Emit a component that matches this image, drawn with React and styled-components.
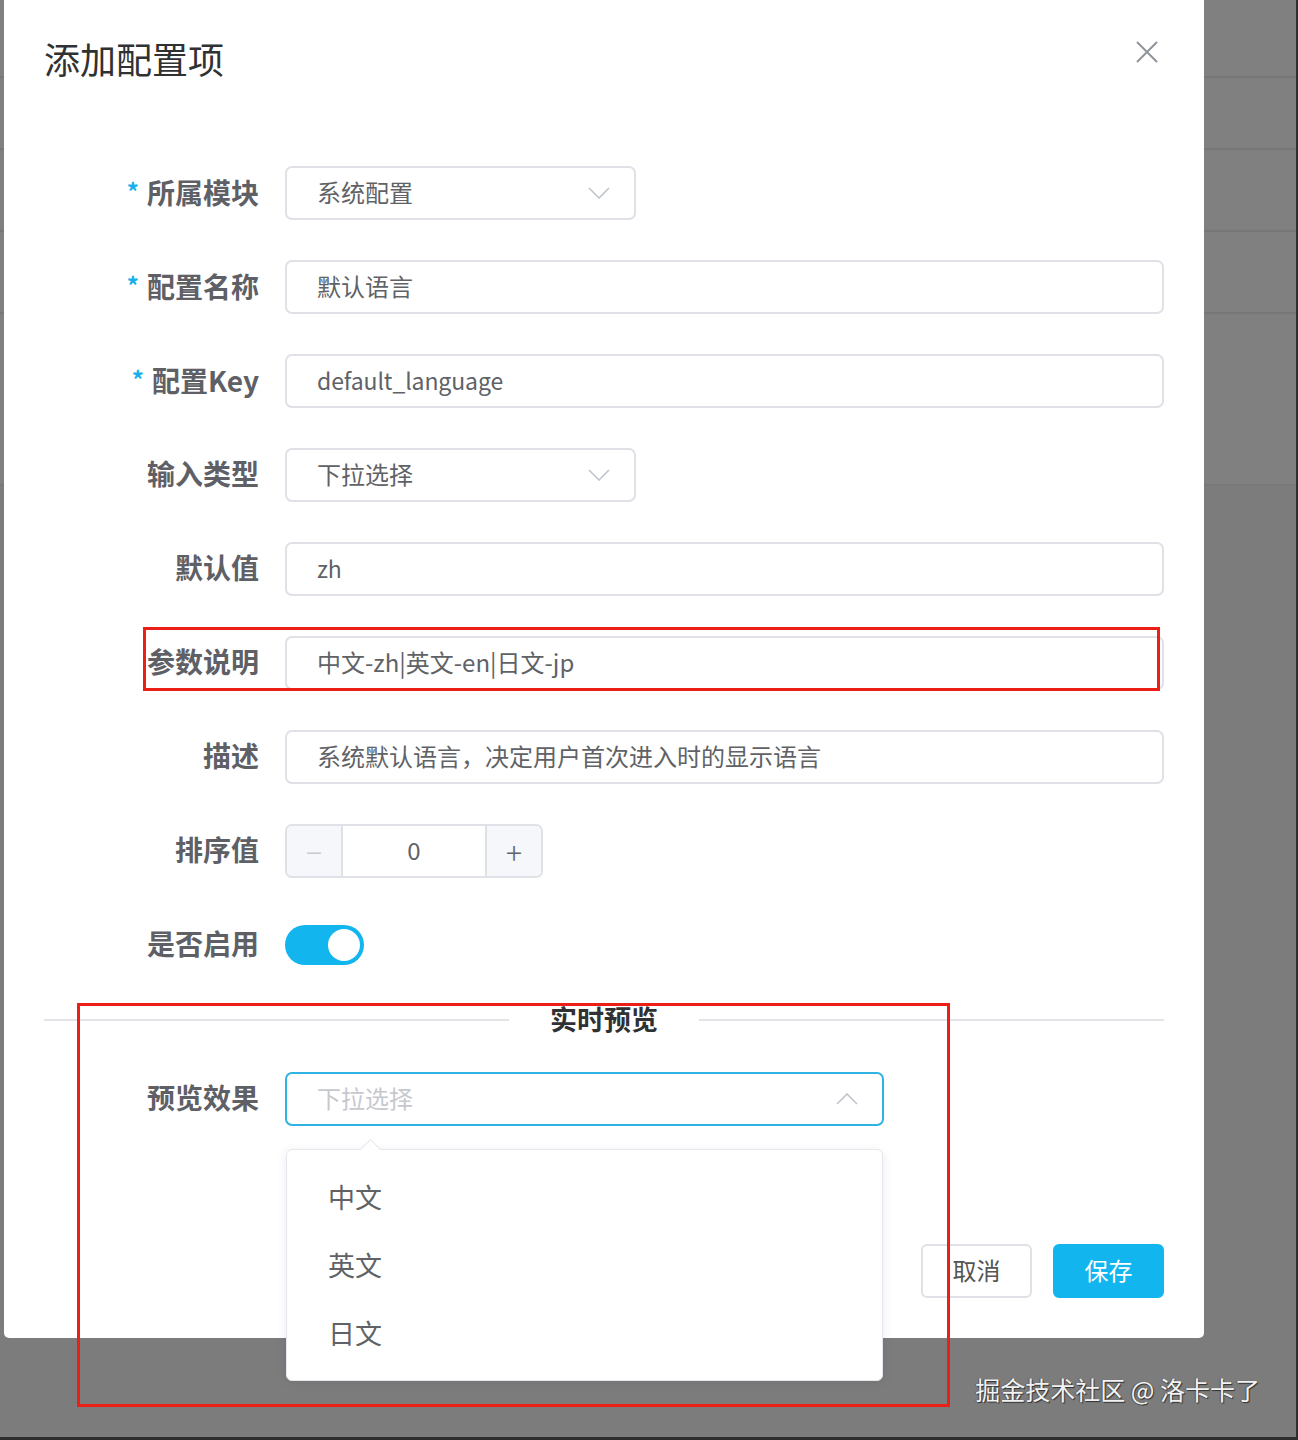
import React from 'react';
import styled, { createGlobalStyle } from 'styled-components';

const GlobalStyle = createGlobalStyle`
  * { box-sizing: border-box; }
  body {
    margin: 0;
    font-family: "Noto Sans CJK SC", "Noto Sans", sans-serif;
  }
`;

const Screen = styled.div`
  position: relative;
  width: 1298px;
  height: 1440px;
  overflow: hidden;
  background: #7c7c7c;
  border-right: 2px solid #2e2e2e;
  border-bottom: 3px solid #2e2e2e;
`;

const BackPage = styled.div`
  display: flex;
  flex-direction: column;
  height: 486px;
  background: #808080;
  border-bottom: 2px solid #787878;
`;

const BackRow = styled.div`
  height: ${p => p.$h}px;
  border-bottom: 2px solid #777;
`;

const Dialog = styled.div`
  position: absolute;
  top: -4px;
  left: 4px;
  width: 1200px;
  background: #fff;
  border-radius: 5px;
  padding: 42px 40px 40px 40px;
`;

const Header = styled.div`
  display: flex;
  justify-content: space-between;
  align-items: flex-start;
  padding-right: 6px;
`;

const Title = styled.h2`
  margin: 0;
  font-size: 36px;
  line-height: 40px;
  font-weight: 400;
  color: #303133;
`;

const Close = styled.svg`
  margin-top: 3px;
  width: 22px;
  height: 22px;
`;

const Form = styled.div`
  margin-top: 88px;
  display: flex;
  flex-direction: column;
`;

const Item = styled.div`
  display: flex;
  align-items: center;
  height: 54px;
  margin-bottom: ${p => (p.$mb !== undefined ? p.$mb : 40)}px;
`;

const Label = styled.label`
  width: 241px;
  flex: none;
  padding: 0 26px 4px 0;
  text-align: right;
  font-size: 28px;
  font-weight: 700;
  color: #5e6066;
  line-height: 50px;
  white-space: nowrap;
`;

const Star = styled.span`
  color: #18b0ea;
  font-size: 24px;
  margin-right: 8px;
  vertical-align: 3px;
`;

const Field = styled.div`
  position: relative;
  width: ${p => (p.$w ? `${p.$w}px` : '100%')};
  height: 54px;
  display: flex;
  align-items: center;
  padding: 0 24px 3px 30px;
  border: 2px solid ${p => (p.$focus ? '#2fb3e2' : '#dfe1e6')};
  border-radius: 7px;
  font-size: 24px;
  color: ${p => (p.$placeholder ? '#c6c8cd' : '#606266')};
  background: #fff;
`;

const FieldText = styled.span`
  flex: 1;
  white-space: nowrap;
`;

const Latin = styled.span`
  font-size: 23px;
  letter-spacing: -0.1px;
`;

const Chevron = ({ up }) => (
  <svg width="22" height="12" viewBox="0 0 22 12" style={{ marginTop: 3 }}>
    <path
      d={up ? 'M1 11 L11 1 L21 11' : 'M1 1 L11 11 L21 1'}
      fill="none"
      stroke="#c0c4cc"
      strokeWidth="1.6"
    />
  </svg>
);

const Stepper = styled.div`
  display: flex;
  width: 258px;
  height: 54px;
  border: 2px solid #dfe1e6;
  border-radius: 7px;
  overflow: hidden;
`;

const StepBtn = styled.div`
  width: 56px;
  flex: none;
  display: flex;
  align-items: center;
  justify-content: center;
  background: #f5f7fa;
  color: ${p => (p.$disabled ? '#c8cad0' : '#606266')};
  font-size: 30px;
  font-weight: 300;
  ${p => (p.$side === 'left' ? 'border-right: 2px solid #dfe1e6;' : 'border-left: 2px solid #dfe1e6;')}
`;

const StepValue = styled.div`
  flex: 1;
  display: flex;
  align-items: center;
  justify-content: center;
  padding-bottom: 3px;
  font-size: 24px;
  color: #606266;
`;

const Switch = styled.div`
  position: relative;
  width: 79px;
  height: 40px;
  border-radius: 20px;
  background: #13b5ef;
  &::after {
    content: '';
    position: absolute;
    top: 4px;
    right: 4px;
    width: 32px;
    height: 32px;
    border-radius: 50%;
    background: #fff;
  }
`;

const Divider = styled.div`
  display: flex;
  align-items: center;
  height: 40px;
  margin-bottom: 32px;
  &::before,
  &::after {
    content: '';
    flex: 1;
    height: 2px;
    background: #e3e4e8;
  }
`;

const DividerText = styled.span`
  padding: 0 41px 3px;
  font-size: 27px;
  font-weight: 700;
  color: #303133;
  line-height: 40px;
`;

const Popper = styled.div`
  position: absolute;
  top: calc(100% + 25px);
  left: -1px;
  width: 597px;
  padding: 13px 0;
  background: #fff;
  border: 1px solid #e4e7ed;
  border-radius: 6px;
  box-shadow: 0 2px 12px rgba(0, 0, 0, 0.08);
  z-index: 2;
  &::before {
    content: '';
    position: absolute;
    top: -8px;
    left: 76px;
    width: 14px;
    height: 14px;
    background: #fff;
    border-top: 1px solid #e4e7ed;
    border-left: 1px solid #e4e7ed;
    transform: rotate(45deg);
  }
`;

const Option = styled.div`
  height: 68px;
  line-height: 68px;
  padding-left: 41px;
  font-size: 27px;
  color: #606266;
`;

const Footer = styled.div`
  display: flex;
  justify-content: flex-end;
  gap: 21px;
  margin-top: 118px;
`;

const Button = styled.button`
  width: 111px;
  height: 54px;
  border-radius: 6px;
  font-family: inherit;
  font-size: 24px;
  border: 2px solid ${p => (p.$primary ? '#13b5ef' : '#dfe1e6')};
  background: ${p => (p.$primary ? '#13b5ef' : '#fff')};
  color: ${p => (p.$primary ? '#fff' : '#555')};
  padding: 0 0 3px;
`;

const Watermark = styled.div`
  position: absolute;
  right: 36px;
  bottom: 28px;
  font-size: 25px;
  line-height: 40px;
  color: #f2f2f2;
  text-shadow: 1px 1px 1px rgba(0, 0, 0, 0.6), -1px 0 1px rgba(0, 0, 0, 0.3);
`;

const Mark = styled.div`
  position: absolute;
  left: ${p => p.$x}px;
  top: ${p => p.$y}px;
  width: ${p => p.$w}px;
  height: ${p => p.$h}px;
  border: 3px solid #ec1f17;
  pointer-events: none;
  z-index: 5;
`;

export default function App() {
  return (
    <Screen>
      <GlobalStyle />
      <BackPage>
        <BackRow $h={78} />
        <BackRow $h={72} />
        <BackRow $h={82} />
        <BackRow $h={82} />
      </BackPage>

      <Dialog>
        <Header>
          <Title>添加配置项</Title>
          <Close viewBox="0 0 22 22">
            <path d="M1 1 L21 21 M21 1 L1 21" stroke="#909399" strokeWidth="2" />
          </Close>
        </Header>

        <Form>
          <Item>
            <Label><Star>*</Star>所属模块</Label>
            <Field $w={351}>
              <FieldText>系统配置</FieldText>
              <Chevron />
            </Field>
          </Item>
          <Item>
            <Label><Star>*</Star>配置名称</Label>
            <Field><FieldText>默认语言</FieldText></Field>
          </Item>
          <Item>
            <Label><Star>*</Star>配置Key</Label>
            <Field><FieldText><Latin>default_language</Latin></FieldText></Field>
          </Item>
          <Item>
            <Label>输入类型</Label>
            <Field $w={351}>
              <FieldText>下拉选择</FieldText>
              <Chevron />
            </Field>
          </Item>
          <Item>
            <Label>默认值</Label>
            <Field><FieldText><Latin>zh</Latin></FieldText></Field>
          </Item>
          <Item>
            <Label>参数说明</Label>
            <Field><FieldText>中文-zh|英文-en|日文-jp</FieldText></Field>
          </Item>
          <Item>
            <Label>描述</Label>
            <Field><FieldText>系统默认语言，决定用户首次进入时的显示语言</FieldText></Field>
          </Item>
          <Item>
            <Label>排序值</Label>
            <Stepper>
              <StepBtn $side="left" $disabled>−</StepBtn>
              <StepValue>0</StepValue>
              <StepBtn $side="right">+</StepBtn>
            </Stepper>
          </Item>
          <Item $mb={28}>
            <Label>是否启用</Label>
            <Switch />
          </Item>

          <Divider>
            <DividerText>实时预览</DividerText>
          </Divider>

          <Item $mb={0}>
            <Label>预览效果</Label>
            <Field $w={599} $focus $placeholder>
              <FieldText>下拉选择</FieldText>
              <Chevron up />
              <Popper>
                <Option>中文</Option>
                <Option>英文</Option>
                <Option>日文</Option>
              </Popper>
            </Field>
          </Item>
        </Form>

        <Footer>
          <Button>取消</Button>
          <Button $primary>保存</Button>
        </Footer>
      </Dialog>

      <Mark $x={143} $y={627} $w={1017} $h={64} />
      <Mark $x={77} $y={1003} $w={873} $h={404} />

      <Watermark>掘金技术社区 @ 洛卡卡了</Watermark>
    </Screen>
  );
}
